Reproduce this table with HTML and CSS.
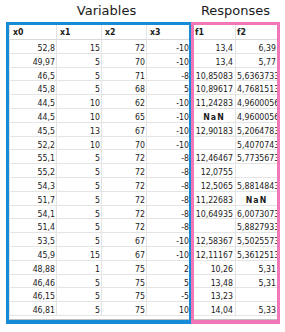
FILE: index.html
```html
<!DOCTYPE html>
<html>
<head>
<meta charset="utf-8">
<link rel="stylesheet" href="styles.css">
</head>
<body>
<div class="wrap">
  <section class="group group-vars">
    <h2 class="title title-vars">Variables</h2>
    <div class="box box-blue">
      <div class="grid grid-vars">
        <div class="hd">x0</div><div class="hd">x1</div><div class="hd">x2</div><div class="hd">x3</div>
        <div class="c">52,8</div><div class="c">15</div><div class="c">72</div><div class="c">-10</div>
        <div class="c">49,97</div><div class="c">5</div><div class="c">70</div><div class="c">-10</div>
        <div class="c">46,5</div><div class="c">5</div><div class="c">71</div><div class="c">-8</div>
        <div class="c">45,8</div><div class="c">5</div><div class="c">68</div><div class="c">5</div>
        <div class="c">44,5</div><div class="c">10</div><div class="c">62</div><div class="c">-10</div>
        <div class="c">44,5</div><div class="c">10</div><div class="c">65</div><div class="c">-10</div>
        <div class="c">45,5</div><div class="c">13</div><div class="c">67</div><div class="c">-10</div>
        <div class="c">52,2</div><div class="c">10</div><div class="c">70</div><div class="c">-10</div>
        <div class="c">55,1</div><div class="c">5</div><div class="c">72</div><div class="c">-8</div>
        <div class="c">55,2</div><div class="c">5</div><div class="c">72</div><div class="c">-8</div>
        <div class="c">54,3</div><div class="c">5</div><div class="c">72</div><div class="c">-8</div>
        <div class="c">51,7</div><div class="c">5</div><div class="c">72</div><div class="c">-8</div>
        <div class="c">54,1</div><div class="c">5</div><div class="c">72</div><div class="c">-8</div>
        <div class="c">51,4</div><div class="c">5</div><div class="c">72</div><div class="c">-8</div>
        <div class="c">53,5</div><div class="c">5</div><div class="c">67</div><div class="c">-10</div>
        <div class="c">45,9</div><div class="c">15</div><div class="c">67</div><div class="c">-10</div>
        <div class="c">48,88</div><div class="c">1</div><div class="c">75</div><div class="c">2</div>
        <div class="c">46,46</div><div class="c">5</div><div class="c">75</div><div class="c">5</div>
        <div class="c">46,15</div><div class="c">5</div><div class="c">75</div><div class="c">-5</div>
        <div class="c">46,81</div><div class="c">5</div><div class="c">75</div><div class="c">10</div>
      </div>
    </div>
  </section>
  <section class="group group-resp">
    <h2 class="title title-resp">Responses</h2>
    <div class="box box-pink">
      <div class="grid grid-resp">
        <div class="hd">f1</div><div class="hd">f2</div>
        <div class="c">13,4</div><div class="c">6,39</div>
        <div class="c">13,4</div><div class="c">5,77</div>
        <div class="c">10,85083</div><div class="c">5,6363733</div>
        <div class="c">10,89617</div><div class="c">4,7681513</div>
        <div class="c">11,24283</div><div class="c">4,9600056</div>
        <div class="c nan">NaN</div><div class="c">4,9600056</div>
        <div class="c">12,90183</div><div class="c">5,2064783</div>
        <div class="c"></div><div class="c">5,4070743</div>
        <div class="c">12,46467</div><div class="c">5,7735673</div>
        <div class="c">12,0755</div><div class="c"></div>
        <div class="c">12,5065</div><div class="c">5,8814843</div>
        <div class="c">11,22683</div><div class="c nan">NaN</div>
        <div class="c">10,64935</div><div class="c">6,0073073</div>
        <div class="c"></div><div class="c">5,8827933</div>
        <div class="c">12,58367</div><div class="c">5,5025573</div>
        <div class="c">12,11167</div><div class="c">5,3612513</div>
        <div class="c">10,26</div><div class="c">5,31</div>
        <div class="c">13,48</div><div class="c">5,31</div>
        <div class="c">13,23</div><div class="c"></div>
        <div class="c">14,04</div><div class="c">5,33</div>
      </div>
    </div>
  </section>
</div>
</body>
</html>
```

FILE: styles.css
```css
html, body {
  margin: 0;
  padding: 0;
  background: #ffffff;
}

.wrap {
  display: flex;
  align-items: flex-start;
  padding: 2px 0 0 6px;
}

.group {
  display: flex;
  flex-direction: column;
}

.title {
  margin: 0 0 2px 0;
  font-family: "DejaVu Sans", sans-serif;
  font-weight: normal;
  font-size: 13px;
  line-height: 18px;
  color: #1a1a1a;
  text-align: center;
  white-space: nowrap;
}

.title-vars {
  padding-left: 16px;
}

.box {
  overflow: hidden;
  background: #fff;
}

.box-blue {
  width: 180px;
  border-style: solid;
  border-color: #148cd6;
  border-width: 3px 2px 4px 3px;
}

.box-pink {
  width: 83px;
  border-style: solid;
  border-color: #f277b8;
  border-width: 3px 3px 4px 3px;
}

.grid {
  display: grid;
  grid-template-rows: 15px repeat(20, 13.8px);
  padding-bottom: 3px;
  border-bottom: 1px solid #bdbdbd;
  font-family: "DejaVu Sans Condensed", "DejaVu Sans", sans-serif;
  font-stretch: condensed;
  font-size: 8.7px;
  color: #1c1c1c;
}

.grid-vars {
  grid-template-columns: 47px 45px 45px 44px;
  border-left: 1px solid #e2e2e2;
  width: 181px;
}

.grid-resp {
  grid-template-columns: 42px 43px;
  width: 85px;
}

.hd {
  font-weight: bold;
  text-align: left;
  padding: 2px 0 0 3px;
  line-height: 11px;
  border-right: 1px solid #e4e4e4;
  border-bottom: 1px solid #d8d8d8;
  white-space: nowrap;
}

.grid-resp .hd {
  padding-left: 1px;
}

.c {
  text-align: right;
  padding: 3px 1px 0 1px;
  line-height: 11px;
  border-right: 1px solid #e4e4e4;
  border-bottom: 1px solid #e4e4e4;
  white-space: nowrap;
}

.grid-resp .c {
  padding-right: 2px;
}

.grid-resp .c + .c {
  padding-left: 1px;
}

.nan {
  text-align: center;
  font-weight: bold;
  letter-spacing: 1px;
}
```
